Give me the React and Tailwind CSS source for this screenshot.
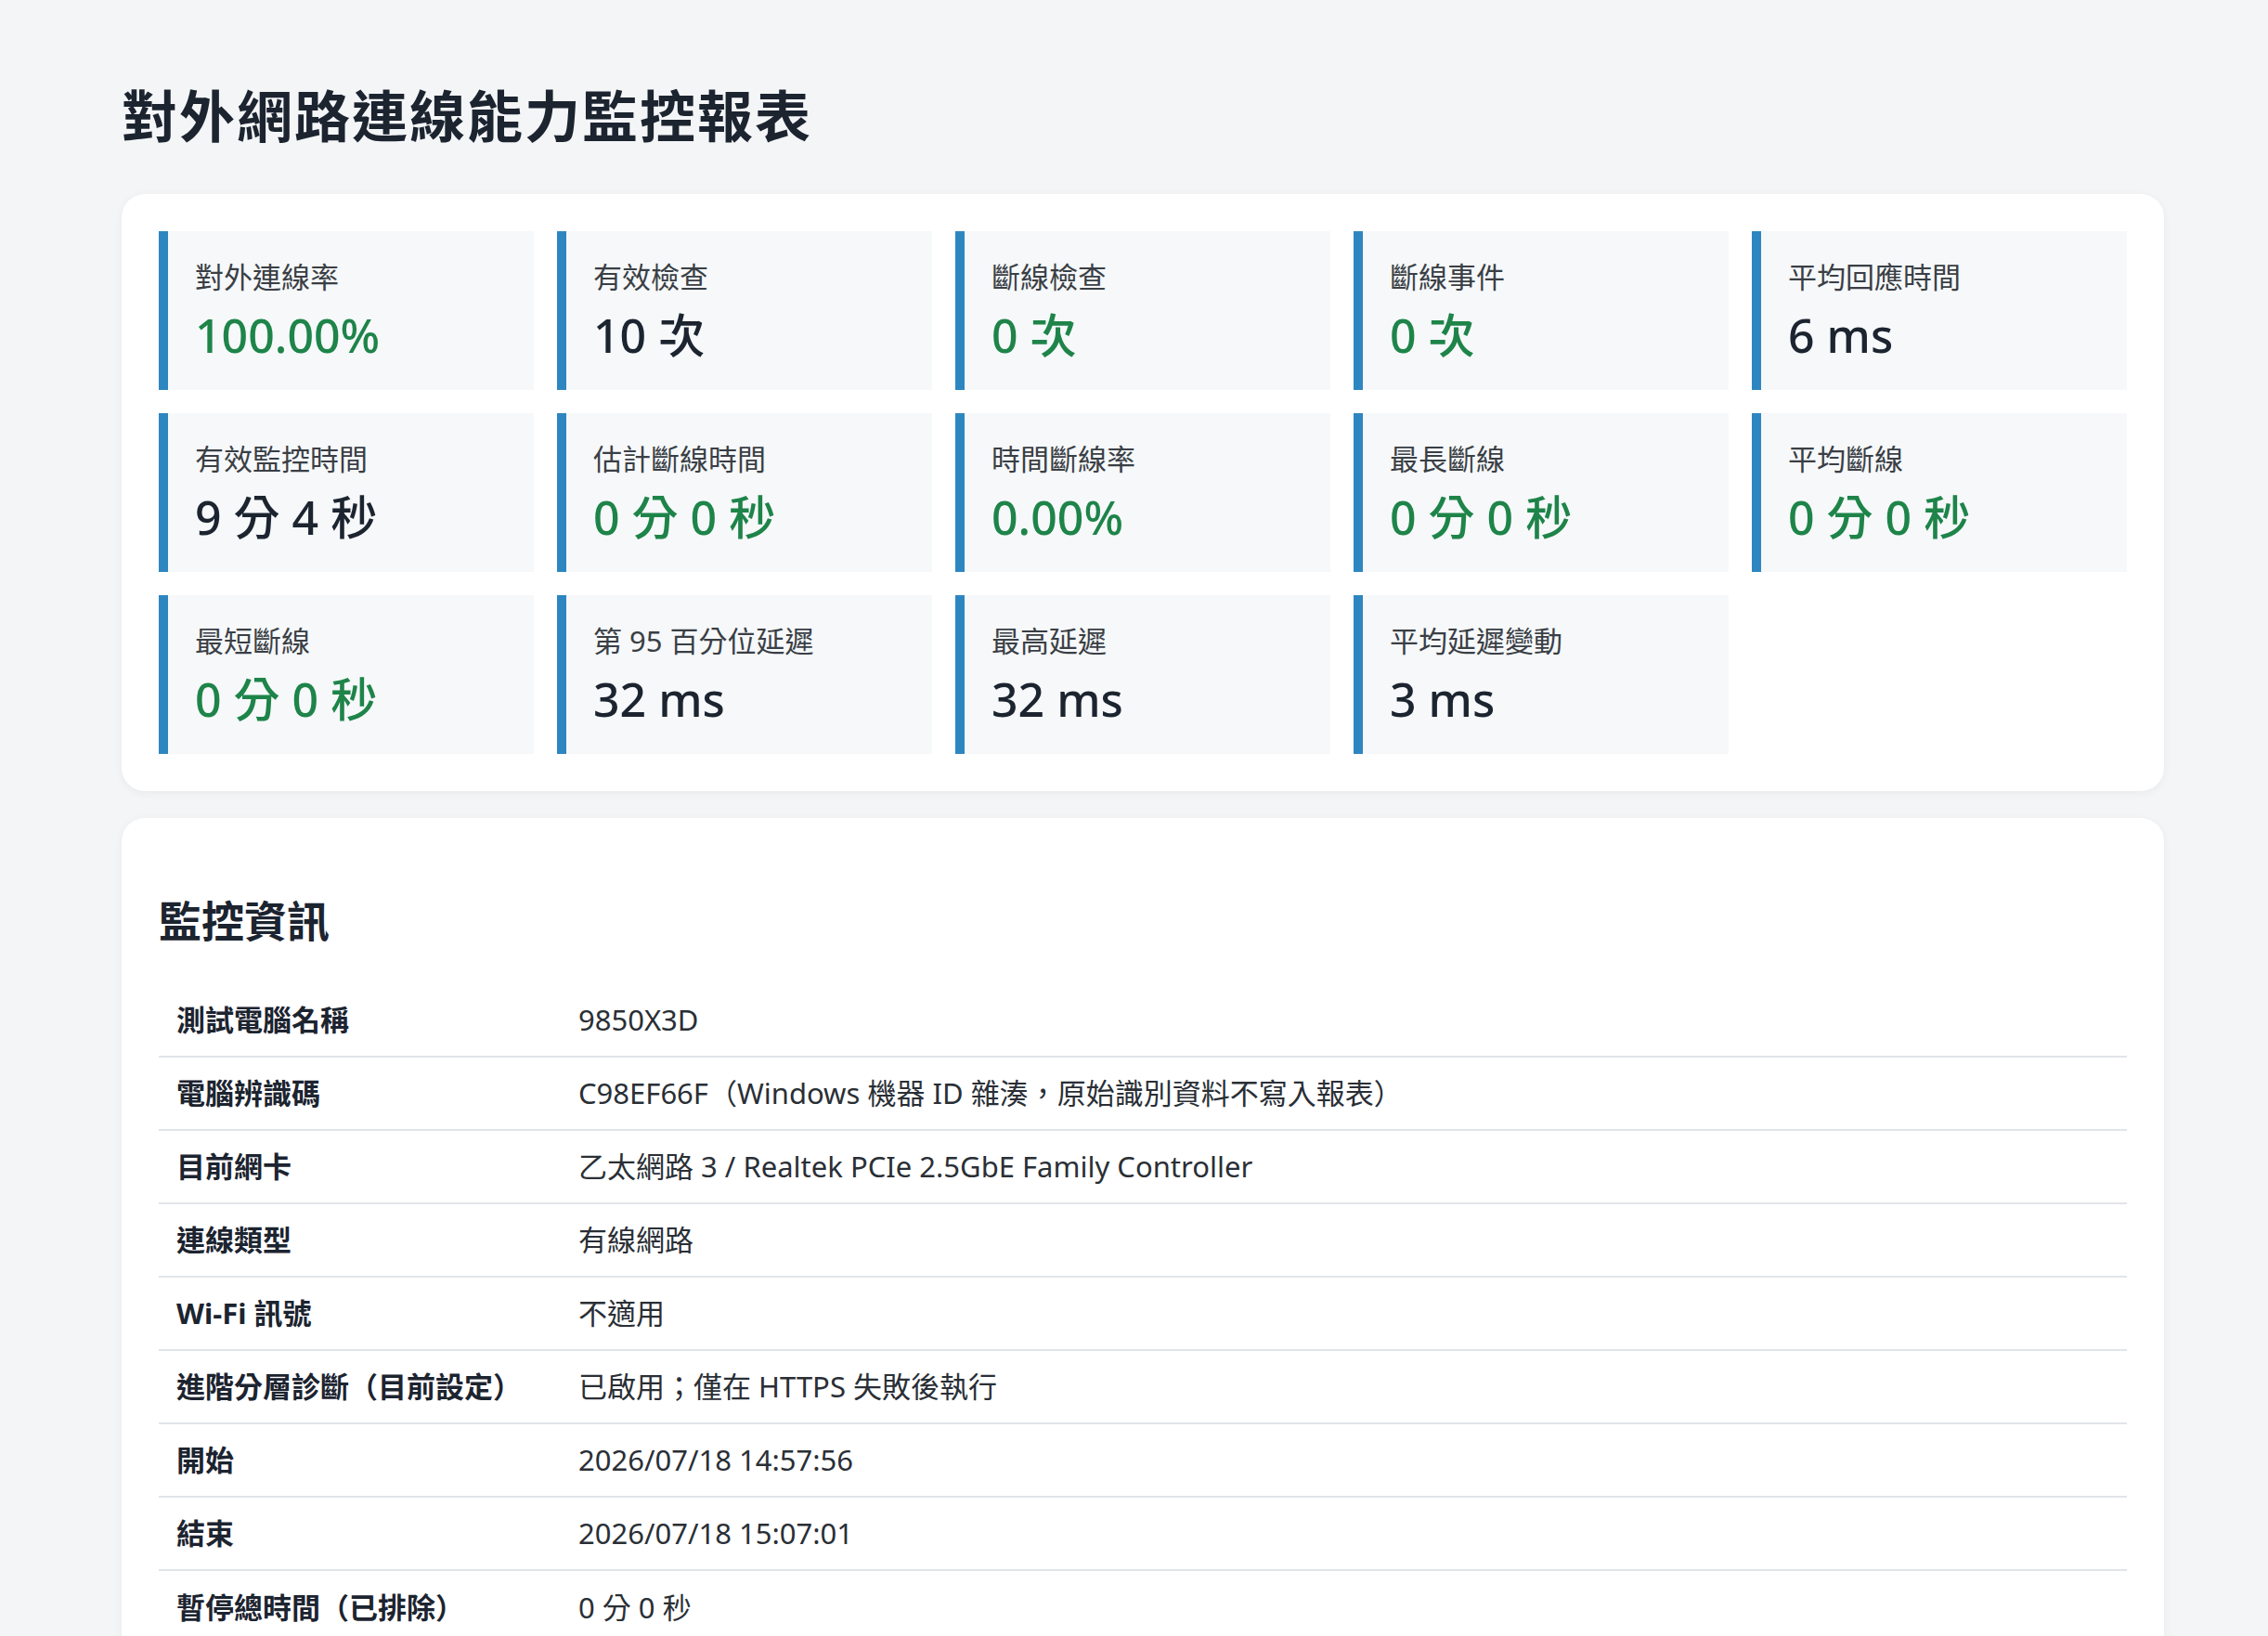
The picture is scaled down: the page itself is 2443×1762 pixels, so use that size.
import React from 'react';

const stats = [
  { label: '對外連線率', value: '100.00%', good: true },
  { label: '有效檢查', value: '10 次' },
  { label: '斷線檢查', value: '0 次', good: true },
  { label: '斷線事件', value: '0 次', good: true },
  { label: '平均回應時間', value: '6 ms' },
  { label: '有效監控時間', value: '9 分 4 秒' },
  { label: '估計斷線時間', value: '0 分 0 秒', good: true },
  { label: '時間斷線率', value: '0.00%', good: true },
  { label: '最長斷線', value: '0 分 0 秒', good: true },
  { label: '平均斷線', value: '0 分 0 秒', good: true },
  { label: '最短斷線', value: '0 分 0 秒', good: true },
  { label: '第 95 百分位延遲', value: '32 ms' },
  { label: '最高延遲', value: '32 ms' },
  { label: '平均延遲變動', value: '3 ms' },
];

const info = [
  ['測試電腦名稱', '9850X3D'],
  ['電腦辨識碼', 'C98EF66F（Windows 機器 ID 雜湊，原始識別資料不寫入報表）'],
  ['目前網卡', '乙太網路 3 / Realtek PCIe 2.5GbE Family Controller'],
  ['連線類型', '有線網路'],
  ['Wi-Fi 訊號', '不適用'],
  ['進階分層診斷（目前設定）', '已啟用；僅在 HTTPS 失敗後執行'],
  ['開始', '2026/07/18 14:57:56'],
  ['結束', '2026/07/18 15:07:01'],
  ['暫停總時間（已排除）', '0 分 0 秒'],
];

const StatTile = ({ label, value, good }) => (
  <div className="h-[171px] bg-[#f6f8fa] border-l-[10px] border-[#2e86c1] pl-[29px] flex flex-col justify-center">
    <div className="text-[31px] leading-none text-[#3a3f45]">{label}</div>
    <div className={`text-[50px] leading-none mt-[22px] font-medium ${good ? 'text-[#1e8449]' : 'text-[#1c2430]'}`}>{value}</div>
  </div>
);

export default function App() {
  return (
    <div className="min-h-screen bg-[#f4f5f7] pl-[131px] pt-[88px] pb-10 text-[#1c2430]" style={{ fontFamily: '"Noto Sans", "Noto Sans CJK TC", sans-serif' }}>
      <h1 className="text-[60px] leading-[74px] font-bold tracking-[2px]">對外網路連線能力監控報表</h1>

      <div className="w-[2200px] mt-[47px] bg-white rounded-[25px] p-[40px] shadow-[0_2px_10px_rgba(0,0,0,0.05)]">
        <div className="grid grid-cols-5 gap-[25px]">
          {stats.map((s, i) => (
            <StatTile key={i} {...s} />
          ))}
        </div>
      </div>

      <div className="w-[2200px] mt-[29px] bg-white rounded-[25px] px-[40px] pt-[80px] pb-4 shadow-[0_2px_10px_rgba(0,0,0,0.05)]">
        <h2 className="text-[46px] leading-[60px] font-bold">監控資訊</h2>
        <div className="mt-[39px]">
          {info.map(([k, v], i) => (
            <div key={i} className={`grid grid-cols-[452px_1fr] h-[79px] items-center text-[31px] ${i < info.length - 1 ? 'border-b-2 border-[#e1e4e8]' : ''}`}>
              <div className="pl-[19px] font-bold">{k}</div>
              <div className="text-[#2a2f36]">{v}</div>
            </div>
          ))}
        </div>
      </div>
    </div>
  );
}
